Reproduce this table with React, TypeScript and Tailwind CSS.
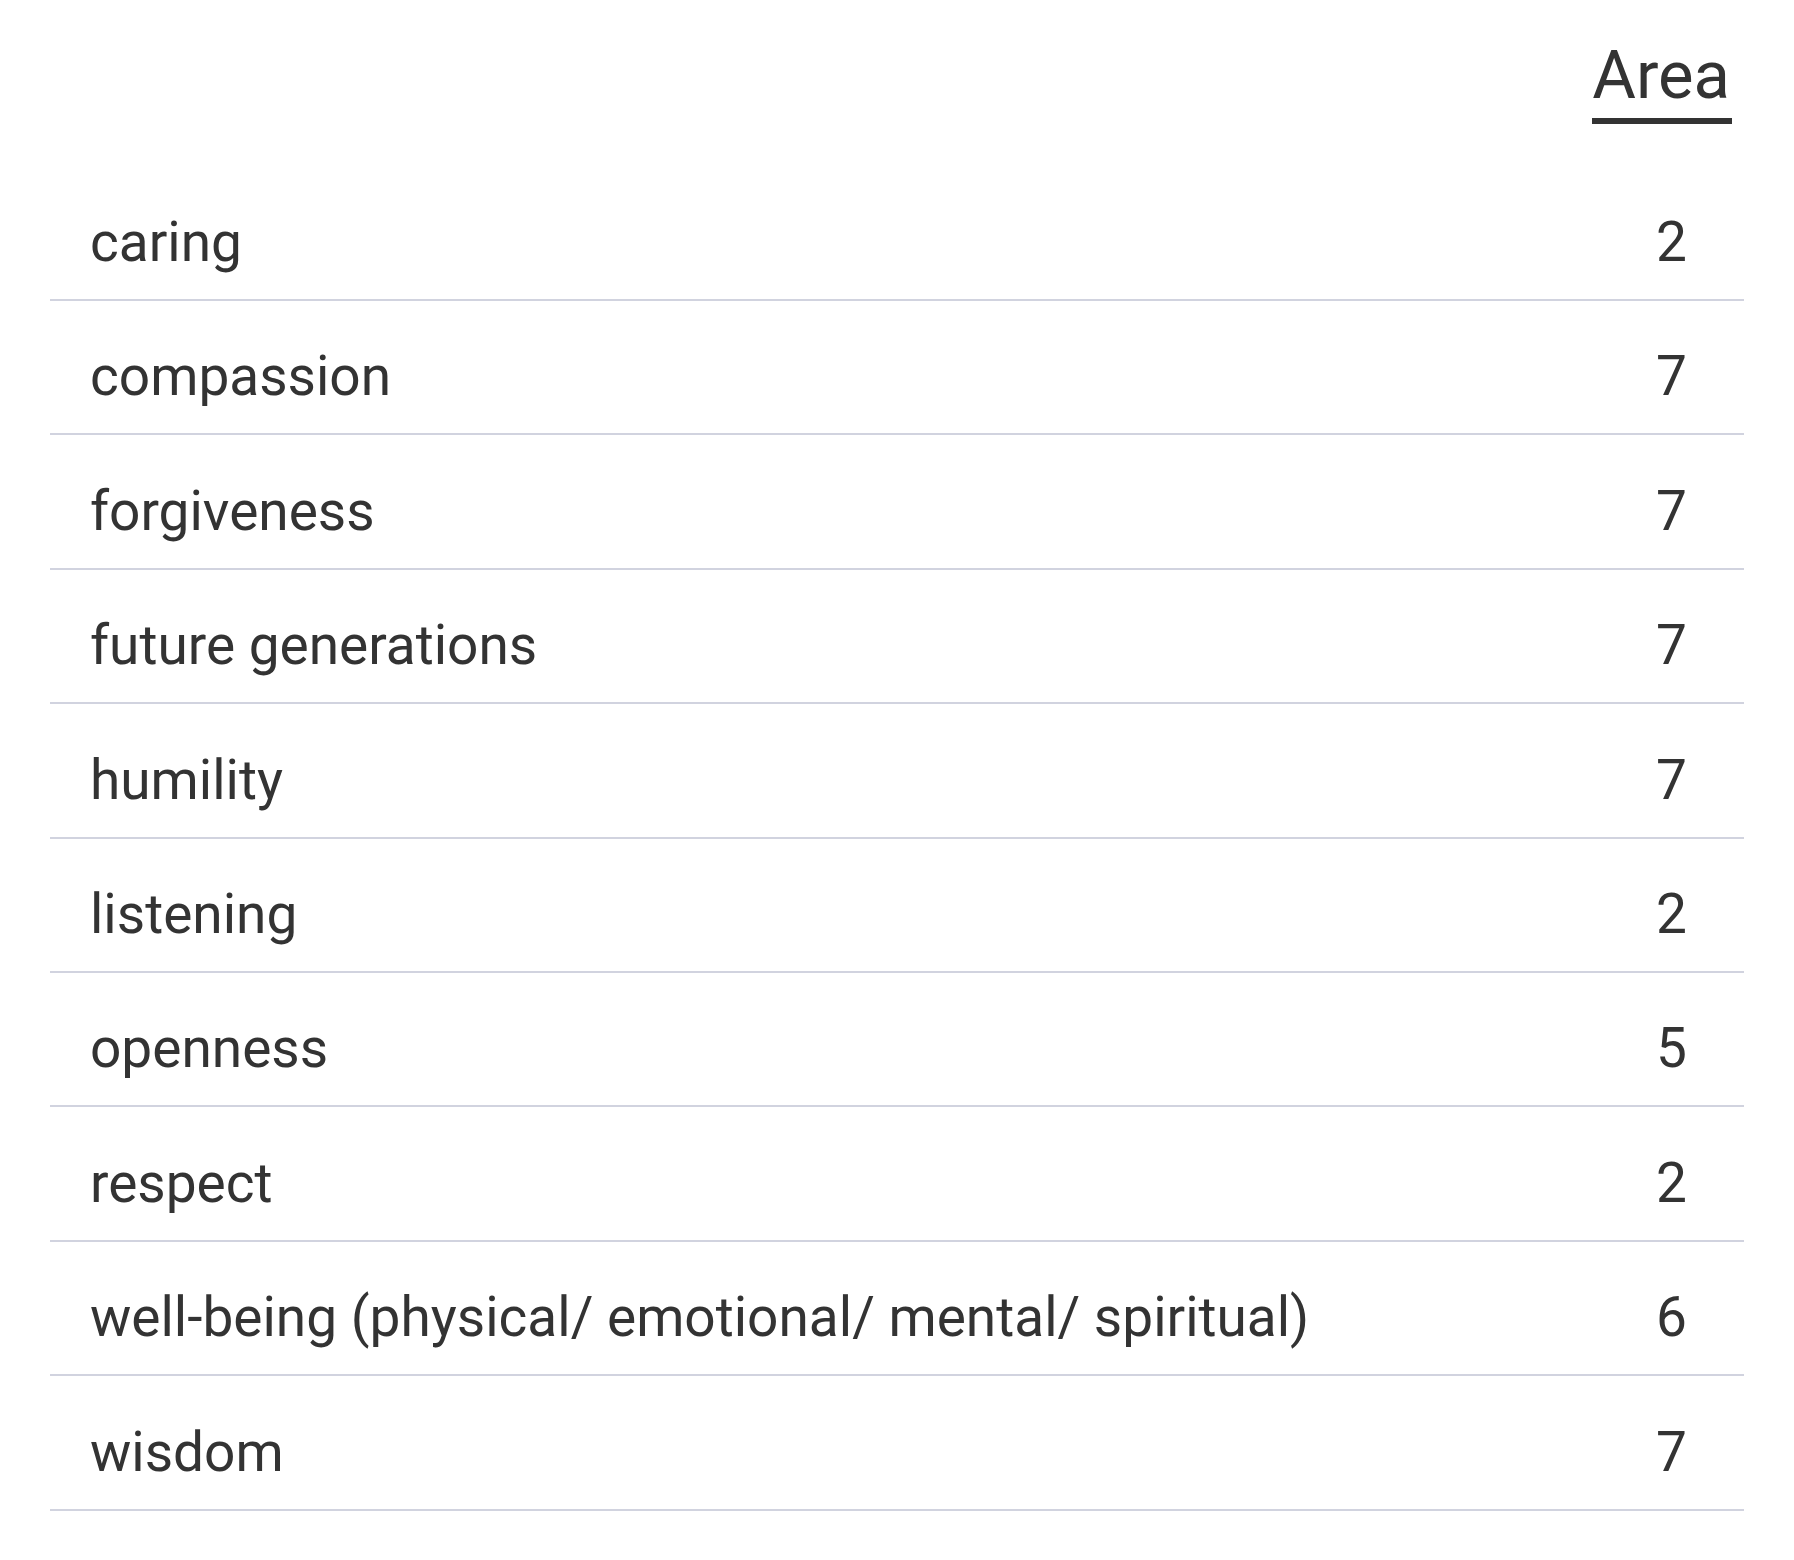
import React from "react";

const rows: [string, number][] = [
  ["caring", 2],
  ["compassion", 7],
  ["forgiveness", 7],
  ["future generations", 7],
  ["humility", 7],
  ["listening", 2],
  ["openness", 5],
  ["respect", 2],
  ["well-being (physical/ emotional/ mental/ spiritual)", 6],
  ["wisdom", 7],
];

export default function App() {
  return (
    <div className="min-h-[1560px] w-[1794px] bg-white text-[#333333] font-['Roboto',_'Liberation_Sans',_sans-serif]">
      <div className="ml-[50px] w-[1694px]">
        <div className="flex justify-end pt-[35px] pr-[12px]">
          <span className="inline-block text-[67px] leading-[80px] pb-[3px] border-b-[6px] border-[#333333] pr-[2px]">
            Area
          </span>
        </div>
        <div className="mt-[42.6px]">
          {rows.map(([label, n]) => (
            <div
              key={label}
              className="box-border h-[134.4px] border-b-2 border-[#d1d3df] flex items-end justify-between pl-[40px] pr-[57px] pb-[24px] text-[55px] leading-[66px]"
            >
              <span>{label}</span>
              <span>{n}</span>
            </div>
          ))}
        </div>
      </div>
    </div>
  );
}
